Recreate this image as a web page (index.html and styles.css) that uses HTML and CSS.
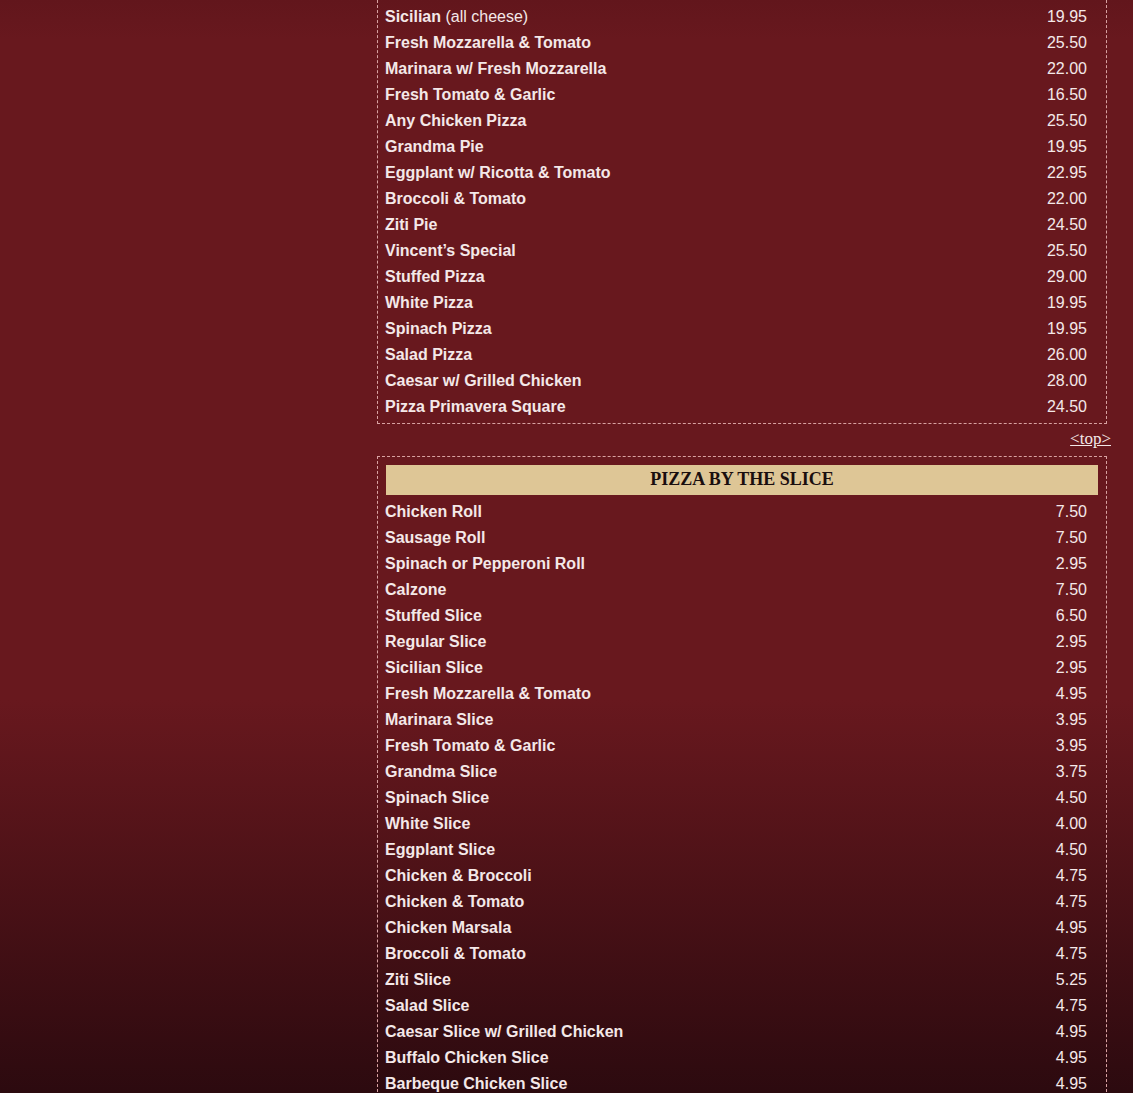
FILE: index.html
```html
<!DOCTYPE html>
<html>
<head>
<meta charset="utf-8">
<link rel="stylesheet" href="styles.css">
</head>
<body>
<div class="page">
  <aside class="sidebar"></aside>
  <main class="content">
    <section class="box box-first">
      <div class="row"><span class="name">Sicilian <span class="note">(all cheese)</span></span><span class="price">19.95</span></div>
      <div class="row"><span class="name">Fresh Mozzarella &amp; Tomato</span><span class="price">25.50</span></div>
      <div class="row"><span class="name">Marinara w/ Fresh Mozzarella</span><span class="price">22.00</span></div>
      <div class="row"><span class="name">Fresh Tomato &amp; Garlic</span><span class="price">16.50</span></div>
      <div class="row"><span class="name">Any Chicken Pizza</span><span class="price">25.50</span></div>
      <div class="row"><span class="name">Grandma Pie</span><span class="price">19.95</span></div>
      <div class="row"><span class="name">Eggplant w/ Ricotta &amp; Tomato</span><span class="price">22.95</span></div>
      <div class="row"><span class="name">Broccoli &amp; Tomato</span><span class="price">22.00</span></div>
      <div class="row"><span class="name">Ziti Pie</span><span class="price">24.50</span></div>
      <div class="row"><span class="name">Vincent’s Special</span><span class="price">25.50</span></div>
      <div class="row"><span class="name">Stuffed Pizza</span><span class="price">29.00</span></div>
      <div class="row"><span class="name">White Pizza</span><span class="price">19.95</span></div>
      <div class="row"><span class="name">Spinach Pizza</span><span class="price">19.95</span></div>
      <div class="row"><span class="name">Salad Pizza</span><span class="price">26.00</span></div>
      <div class="row"><span class="name">Caesar w/ Grilled Chicken</span><span class="price">28.00</span></div>
      <div class="row"><span class="name">Pizza Primavera Square</span><span class="price">24.50</span></div>
    </section>
    <div class="toplink"><a href="#">&lt;top&gt;</a></div>
    <section class="box">
      <h2 class="heading">PIZZA BY THE SLICE</h2>
      <div class="row"><span class="name">Chicken Roll</span><span class="price">7.50</span></div>
      <div class="row"><span class="name">Sausage Roll</span><span class="price">7.50</span></div>
      <div class="row"><span class="name">Spinach or Pepperoni Roll</span><span class="price">2.95</span></div>
      <div class="row"><span class="name">Calzone</span><span class="price">7.50</span></div>
      <div class="row"><span class="name">Stuffed Slice</span><span class="price">6.50</span></div>
      <div class="row"><span class="name">Regular Slice</span><span class="price">2.95</span></div>
      <div class="row"><span class="name">Sicilian Slice</span><span class="price">2.95</span></div>
      <div class="row"><span class="name">Fresh Mozzarella &amp; Tomato</span><span class="price">4.95</span></div>
      <div class="row"><span class="name">Marinara Slice</span><span class="price">3.95</span></div>
      <div class="row"><span class="name">Fresh Tomato &amp; Garlic</span><span class="price">3.95</span></div>
      <div class="row"><span class="name">Grandma Slice</span><span class="price">3.75</span></div>
      <div class="row"><span class="name">Spinach Slice</span><span class="price">4.50</span></div>
      <div class="row"><span class="name">White Slice</span><span class="price">4.00</span></div>
      <div class="row"><span class="name">Eggplant Slice</span><span class="price">4.50</span></div>
      <div class="row"><span class="name">Chicken &amp; Broccoli</span><span class="price">4.75</span></div>
      <div class="row"><span class="name">Chicken &amp; Tomato</span><span class="price">4.75</span></div>
      <div class="row"><span class="name">Chicken Marsala</span><span class="price">4.95</span></div>
      <div class="row"><span class="name">Broccoli &amp; Tomato</span><span class="price">4.75</span></div>
      <div class="row"><span class="name">Ziti Slice</span><span class="price">5.25</span></div>
      <div class="row"><span class="name">Salad Slice</span><span class="price">4.75</span></div>
      <div class="row"><span class="name">Caesar Slice w/ Grilled Chicken</span><span class="price">4.95</span></div>
      <div class="row"><span class="name">Buffalo Chicken Slice</span><span class="price">4.95</span></div>
      <div class="row"><span class="name">Barbeque Chicken Slice</span><span class="price">4.95</span></div>
    </section>
  </main>
</div>
</body>
</html>
```

FILE: styles.css
```css
html, body {
  margin: 0;
  padding: 0;
}
body {
  height: 1093px;
  overflow: hidden;
  background: linear-gradient(to bottom, #62161c 0px, #68181e 40px, #68181e 700px, #2c0a0f 1093px);
  color: #f4e8e8;
  font-family: "Liberation Sans", Arial, sans-serif;
  font-size: 16px;
}
.page {
  display: flex;
}
.sidebar {
  width: 377px;
  flex: 0 0 377px;
}
.content {
  width: 730px;
  display: flex;
  flex-direction: column;
}
.box {
  border: 1px dashed #d8a2a2;
  padding: 8px 8px 4px 8px;
}
.box-first {
  margin-top: -5px;
  padding-bottom: 3px;
}
.row {
  display: flex;
  justify-content: space-between;
  height: 26px;
  line-height: 26px;
  margin-left: -1px;
}
.name {
  font-weight: bold;
}
.note {
  font-weight: normal;
}
.price {
  padding-right: 11px;
}
.toplink {
  text-align: right;
  margin: 5px -4px 7px 0;
  line-height: 20px;
  font-family: "Liberation Serif", "Times New Roman", serif;
  font-size: 17px;
}
.toplink a {
  color: #f4e8e8;
}
.heading {
  margin: 0 0 4px 0;
  height: 30px;
  line-height: 29px;
  background: #dec696;
  color: #1a0e0e;
  text-align: center;
  font-family: "Liberation Serif", "Times New Roman", serif;
  font-size: 18px;
  font-weight: bold;
}
```
